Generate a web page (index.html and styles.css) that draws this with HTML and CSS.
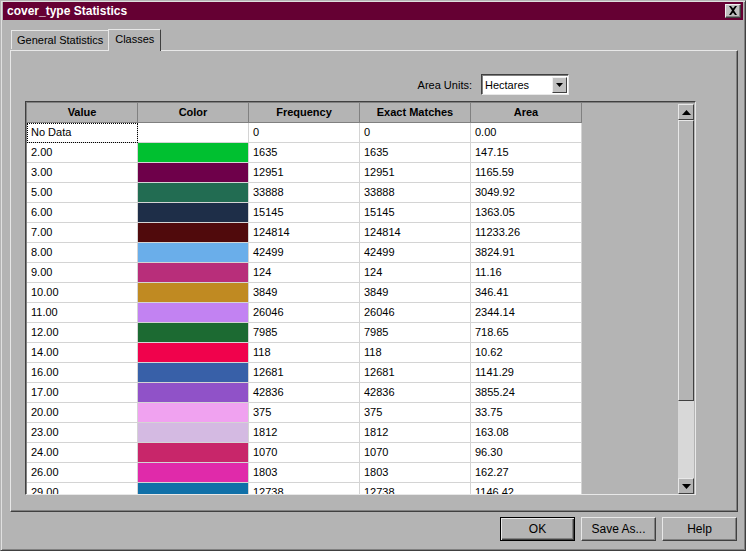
FILE: index.html
```html
<!DOCTYPE html>
<html>
<head>
<meta charset="utf-8">
<link rel="stylesheet" href="styles.css">
</head>
<body>
<div class="window">
  <div class="titlebar">
    <span class="title">cover_type Statistics</span>
    <span class="close"><svg width="10" height="9" viewBox="0 0 10 9"><path d="M1 0h2l2 2.5L7 0h2L6 4.5 9 9H7L5 6.5 3 9H1l3-4.5z" fill="#000"/></svg></span>
  </div>
  <div class="tabs">
    <div class="tab">General Statistics</div>
    <div class="tab active">Classes</div>
  </div>
  <div class="panel">
    <div class="units-row">
      <span class="units-label">Area Units:</span>
      <div class="select">
        <span class="select-text">Hectares</span>
        <span class="select-btn"><svg width="7" height="4" viewBox="0 0 7 4"><path d="M0 0h7L3.5 4z" fill="#000"/></svg></span>
      </div>
    </div>
    <div class="grid">
      <div class="grid-body">
        <div class="row head">
          <div class="cell">Value</div>
          <div class="cell">Color</div>
          <div class="cell">Frequency</div>
          <div class="cell">Exact Matches</div>
          <div class="cell">Area</div>
        </div>
        <div class="row"><div class="cell focus">No Data</div><div class="cell"></div><div class="cell">0</div><div class="cell">0</div><div class="cell">0.00</div></div>
        <div class="row"><div class="cell">2.00</div><div class="cell swatch" style="background:#00c030"></div><div class="cell">1635</div><div class="cell">1635</div><div class="cell">147.15</div></div>
        <div class="row"><div class="cell">3.00</div><div class="cell swatch" style="background:#6e004a"></div><div class="cell">12951</div><div class="cell">12951</div><div class="cell">1165.59</div></div>
        <div class="row"><div class="cell">5.00</div><div class="cell swatch" style="background:#226c52"></div><div class="cell">33888</div><div class="cell">33888</div><div class="cell">3049.92</div></div>
        <div class="row"><div class="cell">6.00</div><div class="cell swatch" style="background:#1e2e48"></div><div class="cell">15145</div><div class="cell">15145</div><div class="cell">1363.05</div></div>
        <div class="row"><div class="cell">7.00</div><div class="cell swatch" style="background:#500a0c"></div><div class="cell">124814</div><div class="cell">124814</div><div class="cell">11233.26</div></div>
        <div class="row"><div class="cell">8.00</div><div class="cell swatch" style="background:#6aaeea"></div><div class="cell">42499</div><div class="cell">42499</div><div class="cell">3824.91</div></div>
        <div class="row"><div class="cell">9.00</div><div class="cell swatch" style="background:#b82e7a"></div><div class="cell">124</div><div class="cell">124</div><div class="cell">11.16</div></div>
        <div class="row"><div class="cell">10.00</div><div class="cell swatch" style="background:#c08a22"></div><div class="cell">3849</div><div class="cell">3849</div><div class="cell">346.41</div></div>
        <div class="row"><div class="cell">11.00</div><div class="cell swatch" style="background:#c282f2"></div><div class="cell">26046</div><div class="cell">26046</div><div class="cell">2344.14</div></div>
        <div class="row"><div class="cell">12.00</div><div class="cell swatch" style="background:#1c6a32"></div><div class="cell">7985</div><div class="cell">7985</div><div class="cell">718.65</div></div>
        <div class="row"><div class="cell">14.00</div><div class="cell swatch" style="background:#f0024c"></div><div class="cell">118</div><div class="cell">118</div><div class="cell">10.62</div></div>
        <div class="row"><div class="cell">16.00</div><div class="cell swatch" style="background:#3860a8"></div><div class="cell">12681</div><div class="cell">12681</div><div class="cell">1141.29</div></div>
        <div class="row"><div class="cell">17.00</div><div class="cell swatch" style="background:#9052c8"></div><div class="cell">42836</div><div class="cell">42836</div><div class="cell">3855.24</div></div>
        <div class="row"><div class="cell">20.00</div><div class="cell swatch" style="background:#f0a2f0"></div><div class="cell">375</div><div class="cell">375</div><div class="cell">33.75</div></div>
        <div class="row"><div class="cell">23.00</div><div class="cell swatch" style="background:#d4bae2"></div><div class="cell">1812</div><div class="cell">1812</div><div class="cell">163.08</div></div>
        <div class="row"><div class="cell">24.00</div><div class="cell swatch" style="background:#c8266a"></div><div class="cell">1070</div><div class="cell">1070</div><div class="cell">96.30</div></div>
        <div class="row"><div class="cell">26.00</div><div class="cell swatch" style="background:#e02aaa"></div><div class="cell">1803</div><div class="cell">1803</div><div class="cell">162.27</div></div>
        <div class="row"><div class="cell">29.00</div><div class="cell swatch" style="background:#1070a8"></div><div class="cell">12738</div><div class="cell">12738</div><div class="cell">1146.42</div></div>
      </div>
      <div class="scrollbar">
        <div class="sb-btn"><svg width="9" height="5" viewBox="0 0 9 5"><path d="M4.5 0L9 5H0z" fill="#000"/></svg></div>
        <div class="sb-thumb"></div>
        <div class="sb-track"></div>
        <div class="sb-btn"><svg width="9" height="5" viewBox="0 0 9 5"><path d="M0 0h9L4.5 5z" fill="#000"/></svg></div>
      </div>
    </div>
  </div>
  <div class="buttons">
    <div class="btn default"><span>OK</span></div>
    <div class="btn"><span>Save As...</span></div>
    <div class="btn"><span>Help</span></div>
  </div>
</div>
</body>
</html>
```
FILE: styles.css
```css
* { box-sizing: border-box; }
html, body { margin: 0; padding: 0; background: #b4b4b4; }
body { font-family: "Liberation Sans", Arial, sans-serif; font-size: 11px; color: #000; }

.window {
  width: 746px;
  height: 551px;
  background: #b4b4b4;
  border-top: 1px solid #b4b4b4;
  border-left: 1px solid #b4b4b4;
  border-right: 1px solid #404040;
  border-bottom: 1px solid #404040;
  box-shadow: inset 1px 1px 0 #e0e0e0, inset -1px -1px 0 #808080;
  padding: 1px 2px 2px 1px;
  display: flex;
  flex-direction: column;
}

.titlebar {
  height: 18px;
  margin-left: 1px;
  background: #650033;
  display: flex;
  align-items: center;
  justify-content: space-between;
  padding: 0 2px 0 4px;
}
.title { color: #fff; font-weight: bold; font-size: 12px; }
.close {
  width: 16px;
  height: 14px;
  background: #c0c0c0;
  border-top: 1px solid #f0f0f0;
  border-left: 1px solid #f0f0f0;
  border-right: 1px solid #404040;
  border-bottom: 1px solid #404040;
  box-shadow: inset -1px -1px 0 #808080;
  display: flex;
  align-items: center;
  justify-content: center;
  padding-bottom: 1px;
}

.tabs {
  display: flex;
  align-items: flex-end;
  height: 30px;
  padding-left: 9px;
}
.tab {
  height: 19px;
  padding: 3px 5px 0 5px;
  background: #b4b4b4;
  border-top: 1px solid #e8e8e8;
  border-left: 1px solid #e8e8e8;
  border-right: 1px solid #404040;
  margin-bottom: 1px;
}
.tab.active {
  height: 22px;
  padding: 3px 6px 0 6px;
  margin-bottom: -1px;
  margin-left: -1px;
  position: relative;
  z-index: 1;
  background: #b4b4b4;
}

.panel {
  margin-left: 8px;
  width: 728px;
  height: 462px;
  border-top: 1px solid #e8e8e8;
  border-left: 1px solid #e8e8e8;
  border-right: 1px solid #404040;
  border-bottom: 1px solid #404040;
  box-shadow: inset -1px -1px 0 #808080;
  padding: 23px 0 0 14px;
  display: flex;
  flex-direction: column;
}

.units-row {
  display: flex;
  align-items: center;
  justify-content: flex-end;
  padding-right: 168px;
  height: 21px;
}
.units-label { margin-right: 9px; margin-top: 1px; }
.select {
  width: 88px;
  height: 21px;
  background: #fff;
  border-top: 1px solid #404040;
  border-left: 1px solid #404040;
  border-right: 1px solid #e8e8e8;
  border-bottom: 1px solid #e8e8e8;
  box-shadow: inset 1px 1px 0 #808080;
  display: flex;
  align-items: center;
  justify-content: space-between;
  padding: 1px 1px 1px 3px;
}
.select-btn {
  width: 15px;
  height: 16px;
  background: #c0c0c0;
  border-top: 1px solid #f0f0f0;
  border-left: 1px solid #f0f0f0;
  border-right: 1px solid #404040;
  border-bottom: 1px solid #404040;
  display: flex;
  align-items: center;
  justify-content: center;
}

.grid {
  margin-top: 6px;
  width: 671px;
  height: 394px;
  border-top: 1px solid #404040;
  border-left: 1px solid #404040;
  border-right: 1px solid #e8e8e8;
  border-bottom: 1px solid #e8e8e8;
  box-shadow: inset 1px 1px 0 #808080;
  padding: 1px 1px 0 1px;
  display: flex;
  background: #b4b4b4;
}
.grid-body {
  flex: 1;
  overflow: hidden;
}
.row {
  display: flex;
  height: 20px;
}
.cell {
  width: 111px;
  height: 20px;
  background: #fff;
  border-right: 1px solid #d4d4d4;
  border-bottom: 1px solid #d4d4d4;
  padding: 3px 0 0 4px;
  white-space: nowrap;
}
.row.head .cell {
  background: #b4b4b4;
  font-weight: bold;
  text-align: center;
  padding: 3px 0 0 0;
  border-right: 1px solid #808080;
  border-bottom: 1px solid #808080;
}
.row.head { height: 20px; }
.cell.focus {
  outline: 1px dotted #000;
  outline-offset: -1px;
}
.cell.swatch { padding: 0; }

.scrollbar {
  width: 16px;
  display: flex;
  flex-direction: column;
  padding-top: 1px;
}
.sb-btn {
  height: 16px;
  background: #b4b4b4;
  border-top: 1px solid #e8e8e8;
  border-left: 1px solid #e8e8e8;
  border-right: 1px solid #404040;
  border-bottom: 1px solid #404040;
  display: flex;
  align-items: center;
  justify-content: center;
}
.sb-thumb {
  height: 281px;
  background: #b4b4b4;
  border-top: 1px solid #e8e8e8;
  border-left: 1px solid #e8e8e8;
  border-right: 1px solid #404040;
  border-bottom: 1px solid #404040;
}
.sb-track {
  flex: 1;
  background: #d8d8d8;
}

.buttons {
  display: flex;
  justify-content: flex-end;
  gap: 6px;
  padding: 5px 6px 0 0;
}
.btn {
  width: 75px;
  height: 24px;
  background: #b4b4b4;
  border-top: 1px solid #e8e8e8;
  border-left: 1px solid #e8e8e8;
  border-right: 1px solid #404040;
  border-bottom: 1px solid #404040;
  box-shadow: inset -1px -1px 0 #808080;
  display: flex;
  align-items: center;
  justify-content: center;
  font-size: 12px;
}
.btn.default {
  border: 1px solid #000;
  box-shadow: inset 1px 1px 0 #e8e8e8, inset -1px -1px 0 #404040, inset -2px -2px 0 #808080;
}
```
